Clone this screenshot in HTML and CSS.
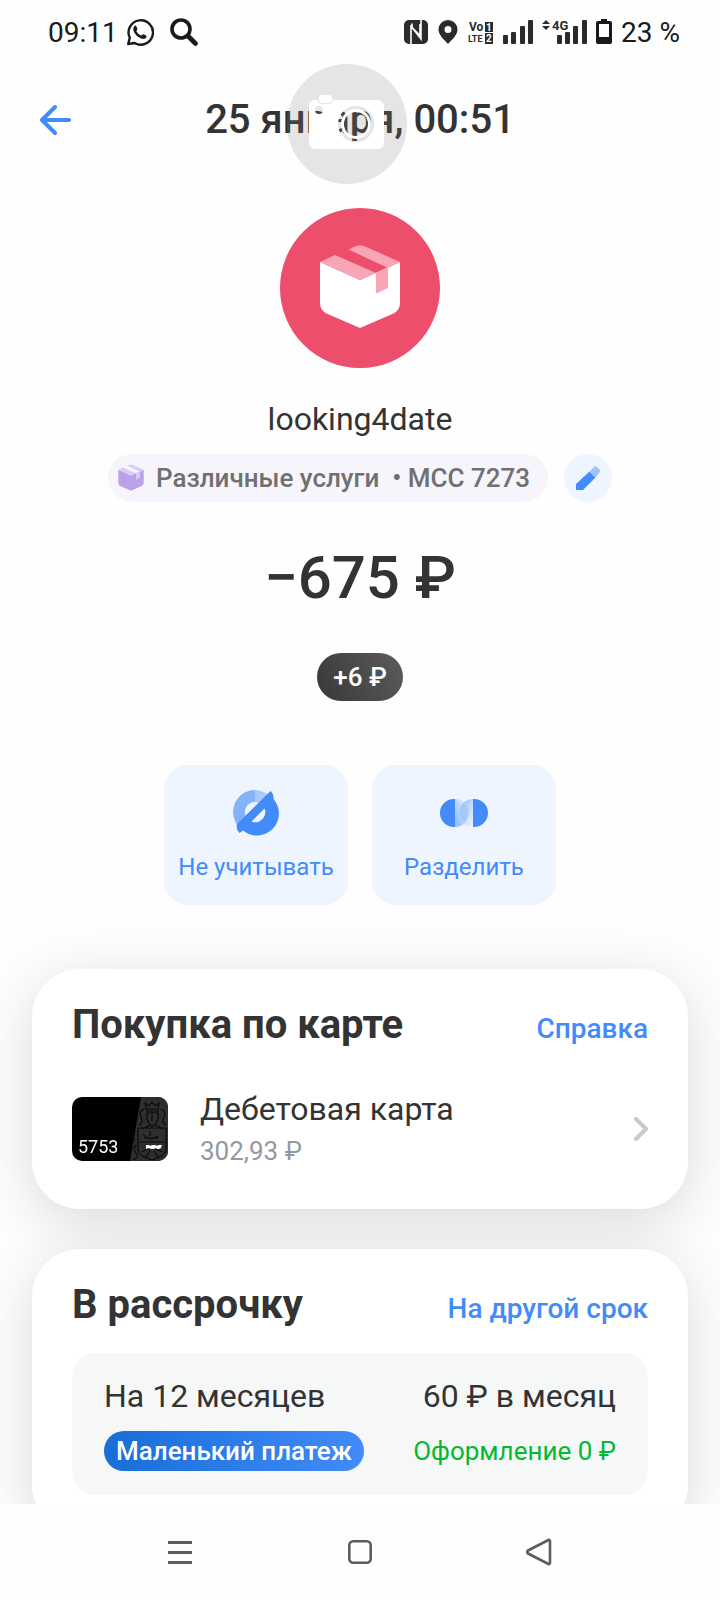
FILE: index.html
```html
<!DOCTYPE html>
<html lang="ru">
<head>
  <meta charset="UTF-8" />
  <meta name="viewport" content="width=device-width, initial-scale=1.0"/>
  <title>Операция - looking4date</title>
  <link rel="stylesheet" href="styles.css">
</head>
<body>
  <div class="status-bar">
    <div class="status-left">
      <span>09:11</span>
      <svg width="28" height="28" viewBox="0 0 28 28" fill="none">
        <path d="M2.2 26l1.6-6.2A12.2 12.2 0 1 1 8.6 25z" stroke="#1a1a1a" stroke-width="2.4" stroke-linejoin="round"/>
        <path d="M8.2 8.2c.8-.8 1.8-.8 2.2.2l1 2.4c.3.8-1.2 1.8-.9 2.5.9 1.900 2.300 3.200 4.400 4.100.8.3 1.700-1.500 2.500-1.200l2.700 1.300c.9.500.4 1.900-.5 2.700-1.600 1.300-4.300.8-7.200-1.200-3.900-2.800-6.600-7.900-4.200-10.800z" fill="#1a1a1a"/>
      </svg>
      <svg class="status-search" width="28" height="28" viewBox="0 0 28 28" fill="none" stroke="#1a1a1a">
        <circle cx="11" cy="11" r="9" stroke-width="3.6"/>
        <path d="M18.500 18.500l7 7" stroke-width="4.600" stroke-linecap="round"/>
      </svg>
    </div>
    <div class="status-right">
      <!-- nfc -->
      <svg width="24" height="24" viewBox="0 0 24 24">
        <rect width="24" height="24" rx="5" fill="#2b2b2b"/>
        <path d="M7 24V6.500L16 15.500V4M8 3.500v4L17 19V0" fill="none" stroke="#fff" stroke-width="1.600"/>
      </svg>
      <svg width="22" height="24" viewBox="0 0 22 24">
        <path d="M11 0a9.500 9.500 0 0 0-9.500 9.500C1.500 15 7 19.500 11 24c4-4.500 9.500-9 9.500-14.500A9.500 9.500 0 0 0 11 0zm0 6a3.500 3.500 0 1 1 0 7 3.500 3.500 0 0 1 0-7z" fill="#2b2b2b"/>
      </svg>
      <!-- volte -->
      <svg class="status-glyph" width="26" height="26" viewBox="0 0 26 26">
        <text x="1" y="12" font-size="12">Vo</text>
        <text x="0" y="23" font-size="9">LTE</text>
        <rect x="17" y="3" width="8" height="10" fill="#2b2b2b"/>
        <rect x="17" y="14" width="8" height="11" fill="#2b2b2b"/>
        <text class="inverse" x="18" y="12" font-size="10">1</text>
        <text class="inverse" x="18" y="23" font-size="10">2</text>
      </svg>
      <svg width="30" height="24" viewBox="0 0 30 24" fill="#2b2b2b">
        <rect x="0" y="15" width="5" height="9" rx="1"/>
        <rect x="8" y="12" width="5" height="12" rx="1"/>
        <rect x="17" y="6" width="5" height="18" rx="1"/>
        <rect x="25" y="0" width="5" height="24" rx="1"/>
      </svg>
      <svg class="status-glyph" width="45" height="26" viewBox="0 0 45 26">
        <path d="M0 5l4-4 4 4zM0 7h8l-4 4z"/>
        <text x="10" y="11" font-size="13">4G</text>
        <rect x="15" y="16" width="5" height="9" rx="1"/>
        <rect x="23" y="13" width="5" height="12" rx="1"/>
        <rect x="31" y="7" width="5" height="18" rx="1"/>
        <rect x="40" y="1" width="5" height="24" rx="1"/>
      </svg>
      <svg width="16" height="26" viewBox="0 0 16 26">
        <path d="M5 0h6v2h3q2 0 2 2v19q0 2-2 2H2q-2 0-2-2V4q0-2 2-2h3zM3 5v13h10V5z" fill="#1a1a1a" fill-rule="evenodd"/>
      </svg>
      <span>23 %</span>
    </div>
  </div>

  <header>
    <button type="button" class="back" aria-label="Назад">
      <svg width="32" height="32" viewBox="0 0 32 32" fill="none" stroke="#428bf9" stroke-width="4" stroke-linecap="round" stroke-linejoin="round">
        <path d="M29 16H2M15 3L2 16l13 13"/>
      </svg>
    </button>
    <h1>25 января, 00:51</h1>
    <!-- floating screenshot button -->
    <svg class="camera" width="120" height="120" viewBox="0 0 120 120">
      <mask id="cameraMask">
        <rect x="22" y="36" width="75" height="49" rx="6" fill="#fff"/>
        <rect x="31" y="30" width="15" height="10" rx="4" fill="#000"/>
        <rect x="32" y="31" width="13" height="8" rx="3" fill="#fff"/>
        <circle cx="32" cy="46" r="4" fill="#000"/>
        <circle cx="69" cy="60" r="18" fill="#000"/>
        <circle cx="69" cy="60" r="15" fill="#fff"/>
        <circle cx="69" cy="60" r="12" fill="#000"/>
      </mask>
      <circle cx="60" cy="60" r="60" fill="#808080" opacity="0.2"/>
      <rect width="120" height="120" fill="#fff" mask="url(#cameraMask)"/>
    </svg>
  </header>

  <main>
    <section class="hero">
      <div class="avatar">
        <svg width="80" height="88" viewBox="0 0 80 88">
          <path d="M0 18l40 18 40-18v41q0 7-6.500 10.500L40 84 6.500 69.500Q0 66 0 59z" fill="#fff"/>
          <path d="M0 18L15 11 56 29 40 36z" fill="#f8a5b5"/>
          <path d="M28.500 5.500L36 2q4-1.500 8 0l36 16-12 6z" fill="#f8a5b5"/>
          <path d="M56 29l12-6v21l-12 5.500z" fill="#f8a5b5"/>
        </svg>
      </div>
      <h2>looking4date</h2>
      <div class="category">
        <div class="chip">
          <svg width="26" height="28" viewBox="0 0 80 88">
            <path d="M0 18l40 18 40-18v41q0 7-6.500 10.500L40 84 6.500 69.500Q0 66 0 59z" fill="#b9a2ea"/>
            <path d="M0 18L15 11 56 29 40 36z" fill="#dacdf5"/>
            <path d="M28.500 5.500L36 2q4-1.500 8 0l36 16-12 6z" fill="#dacdf5"/>
            <path d="M56 29l12-6v21l-12 5.500z" fill="#dacdf5"/>
          </svg>
          <span>Различные услуги &nbsp;• MCC 7273</span>
        </div>
        <button type="button" class="edit" aria-label="Изменить категорию">
          <svg width="26" height="26" viewBox="0 0 26 26">
            <path d="M1 25v-6L14.500 6.500l6 6L8 25z" fill="#428bf9"/>
            <path d="M14.500 6.500L19 2q1.500-1.500 3 0l2.500 2.500q1.500 1.500 0 3l-4 5z" fill="#9cc4fc"/>
          </svg>
        </button>
      </div>
      <p class="amount">−675 ₽</p>
      <span class="bonus">+6 ₽</span>
      <div class="actions">
        <button type="button" class="action">
          <svg width="48" height="48" viewBox="1 1 48 48">
            <path d="M8.500 39.500A22 22 0 0 1 24 2v12a10 10 0 0 0-8 16z" fill="#84b2fb"/>
            <path d="M24 2q8 0 15 6l-9 8q-3-2-6-2z" fill="#a9cafc"/>
            <path d="M39.500 3q3.500 3 3 8A22 22 0 0 1 12 42.500L8.500 45q-4-4-2.500-9zM20.500 33.500A10 10 0 0 0 33.500 20.500z" fill="#428bf9" fill-rule="evenodd"/>
          </svg>
          Не учитывать
        </button>
        <button type="button" class="action">
          <svg width="48" height="48" viewBox="0 0 48 48">
            <defs>
              <linearGradient id="fadeRight" x1="0" y1="1" x2="1" y2="0">
                <stop offset="0" stop-color="#8cb9fb"/>
                <stop offset="1" stop-color="#eff5fe"/>
              </linearGradient>
              <linearGradient id="fadeLeft" x1="0" y1="0" x2="1" y2="1">
                <stop offset="0" stop-color="#8cb9fb"/>
                <stop offset="1" stop-color="#eff5fe"/>
              </linearGradient>
            </defs>
            <path d="M15 10a14 14 0 0 1 0 28z" fill="url(#fadeRight)"/>
            <path d="M33 10a14 14 0 0 0 0 28z" fill="url(#fadeLeft)"/>
            <path d="M24 14a14 14 0 0 1 0 20 14 14 0 0 1 0-20z" fill="#a6c9fc"/>
            <path d="M15 10H14a14 14 0 0 0 0 28h1zM33 10h1a14 14 0 0 1 0 28h-1z" fill="#428bf9"/>
          </svg>
          Разделить
        </button>
      </div>
    </section>

    <div class="cards">
      <section class="card">
        <div class="card-head">
          <h3>Покупка по карте</h3>
          <a href="#">Справка</a>
        </div>
        <a href="#" class="account">
          <span class="thumb">
            <svg width="96" height="64" viewBox="0 0 96 64">
              <path d="M69 0h27v64H58z" fill="#2e2e2e"/>
              <g fill="none" stroke="#0a0a0a" stroke-width="1.200">
                <path d="M74 12l-1-6 4 3 3-4 3 4 4-3-1 6zM75 14h11v8l-3 6h-5l-3-6zM75 17q5-3 11 0M80 17v7M78 28l-8 4M83 28l8 4M66 31h28v22q-1 6-14 10-13-4-14-10zM66 45h28M80 31v-3"/>
                <path d="M71 37q6 8 15 2M72 41h14M78 34v5M70 55q10-7 20 0M74 60l4-6M86 60l-4-6"/>
                <path d="M72 12q-6 3-3 8t-2 8M89 12q6 3 3 8t2 8M64 48q-4 4 0 8t-3 7M63 36q-3 4 0 8"/>
              </g>
              <path d="M74 48h3l1 1 2-1h4v1l3-1h3l-1 3-2 1h-2l-1-1-2 1h-3l-2-1-3 1z" fill="#fff"/>
            </svg>
            <span class="thumb-number">5753</span>
          </span>
          <span class="account-text">
            <span class="account-name">Дебетовая карта</span>
            <span class="account-balance">302,93 ₽</span>
          </span>
          <svg width="16" height="24" viewBox="0 0 16 24" fill="none" stroke="#c5c9d0" stroke-width="4" stroke-linecap="round" stroke-linejoin="round">
            <path d="M4 2l10 10L4 22"/>
          </svg>
        </a>
      </section>

      <section class="card">
        <div class="card-head">
          <h3>В рассрочку</h3>
          <a href="#">На другой срок</a>
        </div>
        <div class="plan">
          <div class="plan-row">
            <span>На 12 месяцев</span>
            <span>60 ₽ в месяц</span>
          </div>
          <div class="plan-row">
            <span class="plan-badge">Маленький платеж</span>
            <span class="plan-fee">Оформление 0 ₽</span>
          </div>
        </div>
      </section>
    </div>
  </main>

  <nav>
    <button type="button" aria-label="Меню">
      <svg width="28" height="28" viewBox="0 0 28 28" stroke="#5c5c5c" stroke-width="3">
        <path d="M2 4.500h24M2 14.500h24M2 24.500h24"/>
      </svg>
    </button>
    <button type="button" aria-label="Домой">
      <svg width="28" height="28" viewBox="0 0 28 28" fill="none" stroke="#5c5c5c" stroke-width="2.600">
        <rect x="3.300" y="3.300" width="21.400" height="21.400" rx="4"/>
      </svg>
    </button>
    <button type="button" aria-label="Назад">
      <svg width="28" height="28" viewBox="1 0 28 28" fill="none" stroke="#5c5c5c" stroke-width="2.600" stroke-linejoin="round">
        <path d="M23.500 2Q25 1.500 25 3.500v21Q25 26.500 23.500 26L3 15.500Q1.500 14 3 12.500z"/>
      </svg>
    </button>
  </nav>
</body>
</html>
```
FILE: styles.css
```css
* {
  box-sizing: border-box;
}

body {
  margin: 0;
  min-height: 100vh;
  padding-bottom: 40px;
  background-color: #fefefe;
  color: #333;
  font-family: Roboto, sans-serif;
}

h1, h2, h3, p {
  margin: 0;
}

button {
  border: none;
  padding: 0;
  background: none;
  font-family: inherit;
  cursor: pointer;
}

a {
  color: #428bf9;
  text-decoration: none;
}

svg {
  display: block;
  flex-shrink: 0;
}

/* status bar */
.status-bar {
  display: flex;
  justify-content: space-between;
  align-items: center;
  height: 64px;
  padding: 0 40px 0 48px;
  color: #1a1a1a;
  font-size: 28px;
}

.status-left {
  display: flex;
  align-items: center;
  gap: 8px;
}

.status-search {
  margin-left: 8px;
}

.status-right {
  display: flex;
  align-items: center;
  gap: 9px;
}

.status-glyph {
  fill: #2b2b2b;
  font-weight: 700;
}

.status-glyph .inverse {
  fill: #fff;
}

/* header */
header {
  position: relative;
  display: flex;
  align-items: center;
  height: 112px;
  padding: 0 40px;
}

header h1 {
  flex: 1;
  padding: 0 32px 2px 0;
  text-align: center;
  font-size: 40px;
  font-weight: 500;
}

.camera {
  position: absolute;
  top: 0;
  left: calc(50% - 73px);
  pointer-events: none;
}

/* operation summary */
.hero {
  display: flex;
  flex-direction: column;
  align-items: center;
  padding: 32px 32px 64px;
}

.avatar {
  display: flex;
  justify-content: center;
  align-items: center;
  width: 160px;
  height: 160px;
  border-radius: 50%;
  background-color: #ed4e6b;
}

.hero h2 {
  margin-top: 32px;
  font-size: 32px;
  font-weight: 400;
  line-height: 38px;
}

.category {
  display: flex;
  gap: 16px;
  margin-top: 16px;
}

.chip {
  display: flex;
  align-items: center;
  gap: 12px;
  height: 48px;
  padding: 0 18px 0 10px;
  border-radius: 24px;
  background-color: #f6f5fc;
  color: #707070;
  font-size: 26px;
  font-weight: 500;
}

.edit {
  display: flex;
  justify-content: center;
  align-items: center;
  width: 48px;
  height: 48px;
  border-radius: 50%;
  background-color: #eff5fe;
}

.amount {
  margin-top: 40px;
  font-size: 60px;
  font-weight: 500;
  line-height: 72px;
}

.bonus {
  margin-top: 39px;
  padding: 0 16px;
  border-radius: 24px;
  background: linear-gradient(60deg, #383838, #5c5c5c);
  color: #fff;
  font-size: 26px;
  font-weight: 500;
  line-height: 48px;
}

.actions {
  display: flex;
  gap: 24px;
  margin-top: 64px;
}

.action {
  display: flex;
  flex-direction: column;
  align-items: center;
  gap: 16px;
  width: 184px;
  height: 140px;
  padding-top: 24px;
  border-radius: 24px;
  background-color: #eff5fe;
  color: #428bf9;
  font-size: 24px;
  line-height: 28px;
  white-space: nowrap;
}

/* cards */
.cards {
  display: flex;
  flex-direction: column;
  gap: 40px;
  padding: 0 32px;
  filter: drop-shadow(0 12px 28px rgba(0, 0, 0, 0.14));
}

.card {
  padding: 32px 40px 38px;
  border-radius: 48px;
  background-color: #fff;
}

.card-head {
  display: flex;
  justify-content: space-between;
  align-items: baseline;
}

.card-head h3 {
  font-size: 40px;
  font-weight: 700;
  line-height: 48px;
}

.card-head a {
  font-size: 28px;
  font-weight: 500;
}

.account {
  display: flex;
  align-items: center;
  gap: 32px;
  margin-top: 38px;
  color: #333;
}

.thumb {
  position: relative;
  border-radius: 10px;
  overflow: hidden;
  background-color: #000;
}

.thumb-number {
  position: absolute;
  left: 6px;
  bottom: 4px;
  color: #fff;
  font-size: 18px;
}

.account-text {
  display: flex;
  flex-direction: column;
  flex: 1;
}

.account-name {
  font-size: 32px;
  line-height: 44px;
}

.account-balance {
  color: #9299a2;
  font-size: 26px;
  line-height: 40px;
}

.plan {
  display: flex;
  flex-direction: column;
  gap: 16px;
  margin-top: 24px;
  padding: 24px 32px;
  border-radius: 24px;
  background-color: #f6f8f8;
}

.plan-row {
  display: flex;
  justify-content: space-between;
  align-items: center;
  font-size: 32px;
  line-height: 38px;
}

.plan-badge {
  padding: 0 12px;
  border-radius: 20px;
  background: linear-gradient(90deg, #186ed6, #428bf9);
  color: #fff;
  font-size: 26px;
  font-weight: 500;
  line-height: 40px;
}

.plan-fee {
  color: #04b82f;
  font-size: 26px;
}

/* system navigation */
nav {
  position: fixed;
  left: 0;
  right: 0;
  bottom: 0;
  display: flex;
  height: 96px;
  padding: 0 12.5%;
  background-color: rgba(254, 254, 254, 0.95);
}

nav button {
  display: flex;
  flex: 1;
  justify-content: center;
  align-items: center;
}
```
